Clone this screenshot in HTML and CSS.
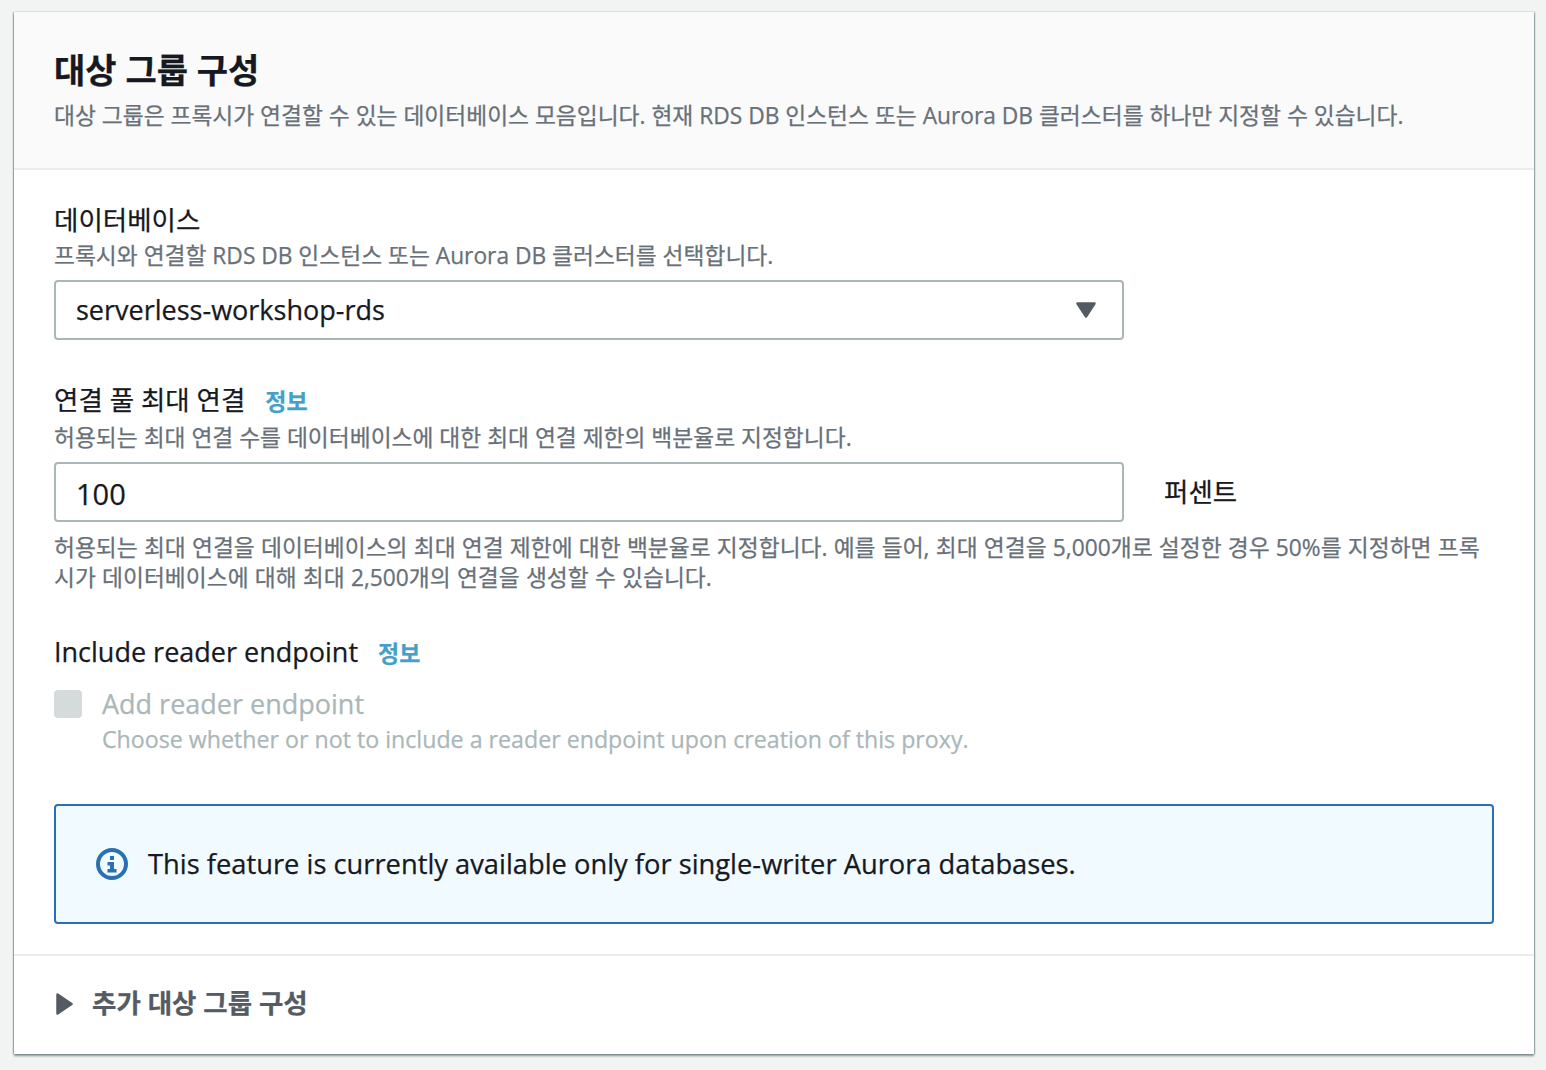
FILE: index.html
```html
<!DOCTYPE html>
<html lang="ko">
<head>
<meta charset="utf-8">
<title>대상 그룹 구성</title>
<link rel="stylesheet" href="styles.css">
</head>
<body>
<section class="card">
  <header class="card-head">
    <h2 class="title">대상 그룹 구성</h2>
    <p class="desc">대상 그룹은 프록시가 연결할 수 있는 데이터베이스 모음입니다. 현재 RDS DB 인스턴스 또는 Aurora DB 클러스터를 하나만 지정할 수 있습니다.</p>
  </header>
  <div class="card-body">
    <div class="field field-db">
      <div class="label ko">데이터베이스</div>
      <p class="desc">프록시와 연결할 RDS DB 인스턴스 또는 Aurora DB 클러스터를 선택합니다.</p>
      <div class="control select">
        <span class="value">serverless-workshop-rds</span>
        <svg class="caret" width="20" height="16" viewBox="0 0 20 16"><path d="M1.500 1.500H18.500L10 14.500Z" fill="#545b64" stroke="#545b64" stroke-width="2.500" stroke-linejoin="round"/></svg>
      </div>
    </div>
    <div class="field field-pool">
      <div class="label ko">연결 풀 최대 연결<a class="info">정보</a></div>
      <p class="desc">허용되는 최대 연결 수를 데이터베이스에 대한 최대 연결 제한의 백분율로 지정합니다.</p>
      <div class="input-row">
        <div class="control"><span class="value number">100</span></div>
        <span class="unit">퍼센트</span>
      </div>
      <p class="desc hint">허용되는 최대 연결을 데이터베이스의 최대 연결 제한에 대한 백분율로 지정합니다. 예를 들어, 최대 연결을 5,000개로 설정한 경우 50%를 지정하면 프록시가 데이터베이스에 대해 최대 2,500개의 연결을 생성할 수 있습니다.</p>
    </div>
    <div class="field field-reader">
      <div class="label">Include reader endpoint<a class="info">정보</a></div>
      <div class="check-row">
        <span class="checkbox"></span>
        <div class="check-text">
          <div class="check-label">Add reader endpoint</div>
          <div class="check-desc">Choose whether or not to include a reader endpoint upon creation of this proxy.</div>
        </div>
      </div>
    </div>
    <div class="alert">
      <svg class="alert-icon" width="32" height="32" viewBox="0 0 32 32"><circle cx="16" cy="16" r="14" fill="none" stroke="#2b6fb3" stroke-width="4"/><path d="M14 8h4v4h-4zM11.500 14h6.500v7h2.500v3.500h-9V21h2.500v-3.500h-2.500z" fill="#2b6fb3"/></svg>
      <span class="alert-text">This feature is currently available only for single-writer Aurora databases.</span>
    </div>
  </div>
  <footer class="card-foot">
    <svg class="expand" width="17" height="22" viewBox="0 0 17 22"><path d="M1.500 1.500L15.500 11L1.500 20.500Z" fill="#545b64" stroke="#545b64" stroke-width="2.500" stroke-linejoin="round"/></svg>
    <span class="foot-text">추가 대상 그룹 구성</span>
  </footer>
</section>
</body>
</html>
```
FILE: styles.css
```css
* { box-sizing: border-box; }
html, body { height: 100%; }
body {
  margin: 0;
  padding: 12px 12px 16px 14px;
  background: #f2f3f3;
  color: #16191f;
  font-family: "Open Sans", "Noto Sans CJK KR", sans-serif;
  font-size: 27px;
  line-height: 36px;
  -webkit-text-stroke: 0.25px;
}
.card {
  background: #fff;
  box-shadow: 0 2px 2px rgba(0, 28, 36, .45), -1px 0 1px rgba(0, 28, 36, .25), 1px 0 1px rgba(0, 28, 36, .25);
  height: 1042px;
  display: flex;
  flex-direction: column;
}
.card-head {
  height: 158px;
  padding: 36px 40px 0;
  background: #fafafa;
  border-bottom: 2px solid #eaeded;
}
.title {
  margin: 0;
  font-size: 34px;
  line-height: 44px;
  font-weight: 700;
}
.desc {
  margin: 0;
  font-size: 22.750px;
  line-height: 30px;
  color: #687078;
}
.card-head .desc { margin-top: 9px; }
.card-body {
  flex: 1;
  padding: 32px 40px 0;
  border-bottom: 2px solid #eaeded;
}
.label { line-height: 36px; }
.ko { font-size: 26.500px; }
.field-db .label { margin-bottom: 3px; }
.field-pool .label { margin-bottom: 4px; }
.info {
  margin-left: 20px;
  font-size: 23px;
  font-weight: 700;
  color: #44a0c8;
}
.control {
  display: flex;
  align-items: center;
  justify-content: space-between;
  width: 1070px;
  height: 60px;
  padding: 0 26px 0 20px;
  background: #fff;
  border: 2px solid #aab7b8;
  border-radius: 4px;
  font-size: 27px;
}
.number { font-size: 29px; margin-top: 3px; }
.select { margin-top: 9px; }
.field-pool { margin-top: 42px; }
.input-row {
  display: flex;
  align-items: center;
  gap: 40px;
  margin-top: 9px;
}
.unit { margin-top: 0; font-size: 26.500px; }
.hint { margin-top: 11px; word-spacing: 0.300px; }
.field-reader { margin-top: 41px; }
.check-row {
  display: flex;
  gap: 20px;
  margin-top: 15px;
}
.checkbox {
  width: 28px;
  height: 28px;
  margin-top: 4px;
  border-radius: 4px;
  background: #d5dbdb;
}
.check-label, .check-desc { color: #aab7b8; }
.check-desc { font-size: 23.200px; line-height: 36px; margin-top: -1px; }
.alert {
  display: flex;
  align-items: center;
  gap: 20px;
  height: 120px;
  margin-top: 47px;
  padding: 0 40px;
  background: #f1faff;
  border: 2px solid #2b6fb3;
  border-radius: 4px;
}
.alert-text { font-size: 27.300px; }
.card-foot {
  display: flex;
  align-items: center;
  gap: 19px;
  height: 98px;
  padding: 0 40px 4px 42px;
}
.expand { margin-top: 2px; }
.foot-text {
  font-size: 26.500px;
  font-weight: 700;
  color: #545b64;
}
```
